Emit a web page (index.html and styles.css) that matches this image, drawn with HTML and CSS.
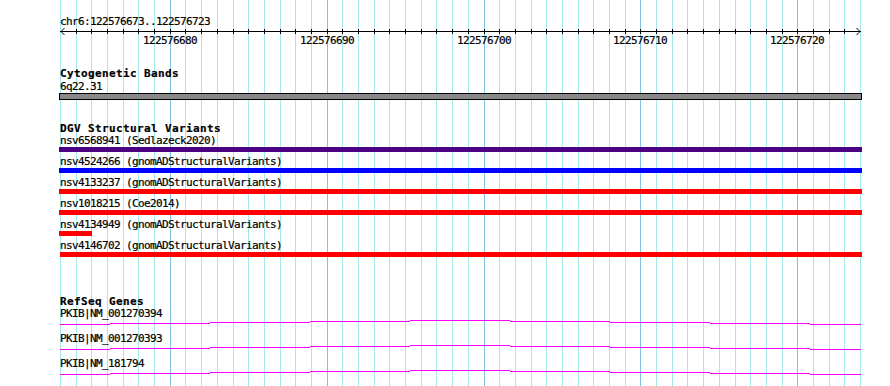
FILE: index.html
```html
<!DOCTYPE html>
<html>
<head>
<meta charset="utf-8">
<title>Genome browser</title>
<link rel="stylesheet" href="styles.css">
</head>
<body>
<div class="browser">
  <svg class="grid" width="890" height="386" viewBox="0 0 890 386">
    <path class="grid-minor" d="M60.5 0V386M76.5 0V386M91.5 0V386M107.5 0V386M123.5 0V386M138.5 0V386M154.5 0V386M185.5 0V386M201.5 0V386M217.5 0V386M233.5 0V386M248.5 0V386M264.5 0V386M280.5 0V386M295.5 0V386M311.5 0V386M342.5 0V386M358.5 0V386M374.5 0V386M389.5 0V386M405.5 0V386M421.5 0V386M436.5 0V386M452.5 0V386M468.5 0V386M499.5 0V386M515.5 0V386M531.5 0V386M546.5 0V386M562.5 0V386M578.5 0V386M593.5 0V386M609.5 0V386M625.5 0V386M656.5 0V386M672.5 0V386M687.5 0V386M703.5 0V386M719.5 0V386M735.5 0V386M750.5 0V386M766.5 0V386M782.5 0V386M813.5 0V386M829.5 0V386M844.5 0V386M860.5 0V386"/>
    <path class="grid-major" d="M170.5 0V386M327.5 0V386M484.5 0V386M640.5 0V386M797.5 0V386"/>
  </svg>

  <div class="tracks">
    <section class="ruler">
      <div class="label">chr6:122576673..122576723</div>
      <svg class="axis" width="890" height="8" viewBox="0 0 890 8">
        <path class="ink" d="M60 4.5H861"/>
        <path class="ink" d="M64.5 1L61 4.5L64.5 8M856.5 1L860 4.5L856.5 8"/>
        <path class="ink" d="M76.5 2V7M91.5 2V7M107.5 2V7M123.5 2V7M138.5 2V7M154.5 2V7M170.5 2V7M185.5 2V7M201.5 2V7M217.5 2V7M233.5 2V7M248.5 2V7M264.5 2V7M280.5 2V7M295.5 2V7M311.5 2V7M327.5 2V7M342.5 2V7M358.5 2V7M374.5 2V7M389.5 2V7M405.5 2V7M421.5 2V7M436.5 2V7M452.5 2V7M468.5 2V7M484.5 2V7M499.5 2V7M515.5 2V7M531.5 2V7M546.5 2V7M562.5 2V7M578.5 2V7M593.5 2V7M609.5 2V7M625.5 2V7M640.5 2V7M656.5 2V7M672.5 2V7M687.5 2V7M703.5 2V7M719.5 2V7M735.5 2V7M750.5 2V7M766.5 2V7M782.5 2V7M797.5 2V7M813.5 2V7M829.5 2V7M844.5 2V7"/>
      </svg>
      <div class="tick-labels">
        <span class="tick" style="left:143px">122576680</span>
        <span class="tick" style="left:300px">122576690</span>
        <span class="tick" style="left:457px">122576700</span>
        <span class="tick" style="left:613px">122576710</span>
        <span class="tick" style="left:770px">122576720</span>
      </div>
    </section>

    <section class="cyto">
      <div class="label title">Cytogenetic Bands</div>
      <div class="label band-label">6q22.31</div>
      <div class="band"></div>
    </section>

    <section class="dgv">
      <div class="label title">DGV Structural Variants</div>
      <div class="rows">
        <div class="row">
          <div class="label">nsv6568941 (Sedlazeck2020)</div>
          <div class="bar purple"></div>
        </div>
        <div class="row">
          <div class="label">nsv4524266 (gnomADStructuralVariants)</div>
          <div class="bar blue"></div>
        </div>
        <div class="row">
          <div class="label">nsv4133237 (gnomADStructuralVariants)</div>
          <div class="bar red"></div>
        </div>
        <div class="row">
          <div class="label">nsv1018215 (Coe2014)</div>
          <div class="bar red"></div>
        </div>
        <div class="row">
          <div class="label">nsv4134949 (gnomADStructuralVariants)</div>
          <div class="bar red short"></div>
        </div>
        <div class="row">
          <div class="label">nsv4146702 (gnomADStructuralVariants)</div>
          <div class="bar red inset"></div>
        </div>
      </div>
    </section>

    <section class="refseq">
      <div class="label title">RefSeq Genes</div>
      <div class="genes">
        <div class="gene">
          <div class="label">PKIB|NM_001270394</div>
          <svg class="gene-line" width="890" height="14" viewBox="0 0 890 14">
            <path d="M60 5.5H110M110 4.5H210M210 3.5H310M310 2.5H410M410 1.5H510M510 2.5H610M610 3.5H710M710 4.5H810M810 5.5H861"/>
          </svg>
        </div>
        <div class="gene">
          <div class="label">PKIB|NM_001270393</div>
          <svg class="gene-line" width="890" height="14" viewBox="0 0 890 14">
            <path d="M60 5.5H110M110 4.5H210M210 3.5H310M310 2.5H410M410 1.5H510M510 2.5H610M610 3.5H710M710 4.5H810M810 5.5H861"/>
          </svg>
        </div>
        <div class="gene">
          <div class="label">PKIB|NM_181794</div>
          <svg class="gene-line" width="890" height="14" viewBox="0 0 890 14">
            <path d="M60 5.5H110M110 4.5H210M210 3.5H310M310 2.5H410M410 1.5H510M510 2.5H610M610 3.5H710M710 4.5H810M810 5.5H861"/>
          </svg>
        </div>
      </div>
    </section>
  </div>
</div>
</body>
</html>
```

FILE: styles.css
```css
html, body {
  margin: 0;
  padding: 0;
  background: #ffffff;
}

.browser {
  position: relative;
  width: 890px;
  height: 386px;
  overflow: hidden;
  background: #ffffff;
  color: #000000;
  font-family: "DejaVu Sans Mono", "Liberation Mono", monospace;
  font-size: 11px;
  line-height: 11px;
  letter-spacing: -0.62px;
  -webkit-text-stroke: 0.2px #000000;
}

.grid {
  position: absolute;
  left: 0;
  top: 0;
  display: block;
}

.grid path {
  fill: none;
  stroke-width: 1;
  shape-rendering: crispEdges;
}

.grid-minor {
  stroke: #a4e8ee;
}

.grid-major {
  stroke: #80c4e4;
}

.tracks {
  position: relative;
  padding-top: 16px;
}

.label {
  height: 11px;
  padding-left: 60px;
  white-space: nowrap;
}

.title {
  font-weight: bold;
  letter-spacing: 0.38px;
}

/* ruler */
.axis {
  display: block;
}

.axis .ink {
  fill: none;
  stroke: #000000;
  stroke-width: 1;
}

.tick-labels {
  position: relative;
  height: 11px;
}

.tick {
  position: absolute;
  top: 0;
  white-space: nowrap;
}

/* cytogenetic bands */
.cyto {
  margin-top: 22px;
}

.band-label {
  margin-top: 2px;
}

.band {
  margin-top: 1px;
  margin-left: 59px;
  width: 803px;
  height: 7px;
  box-sizing: border-box;
  border: 1px solid #000000;
  background: #888888;
}

/* DGV */
.dgv {
  margin-top: 23px;
}

.rows {
  margin-top: 1px;
  display: flex;
  flex-direction: column;
}

.row {
  height: 21px;
}

.bar {
  margin-top: 1px;
  margin-left: 59px;
  width: 803px;
  height: 5px;
}

.bar.purple { background: #4b0082; }
.bar.blue { background: #0000ff; }
.bar.red { background: #ff0000; }

.bar.short {
  width: 33px;
}

.bar.inset {
  margin-left: 60px;
  width: 802px;
}

/* RefSeq */
.refseq {
  margin-top: 35px;
}

.genes {
  margin-top: 1px;
}

.gene {
  height: 25px;
}

.gene-line {
  display: block;
}

.gene-line path {
  fill: none;
  stroke: #ff00ff;
  stroke-width: 1;
  shape-rendering: crispEdges;
}
```
